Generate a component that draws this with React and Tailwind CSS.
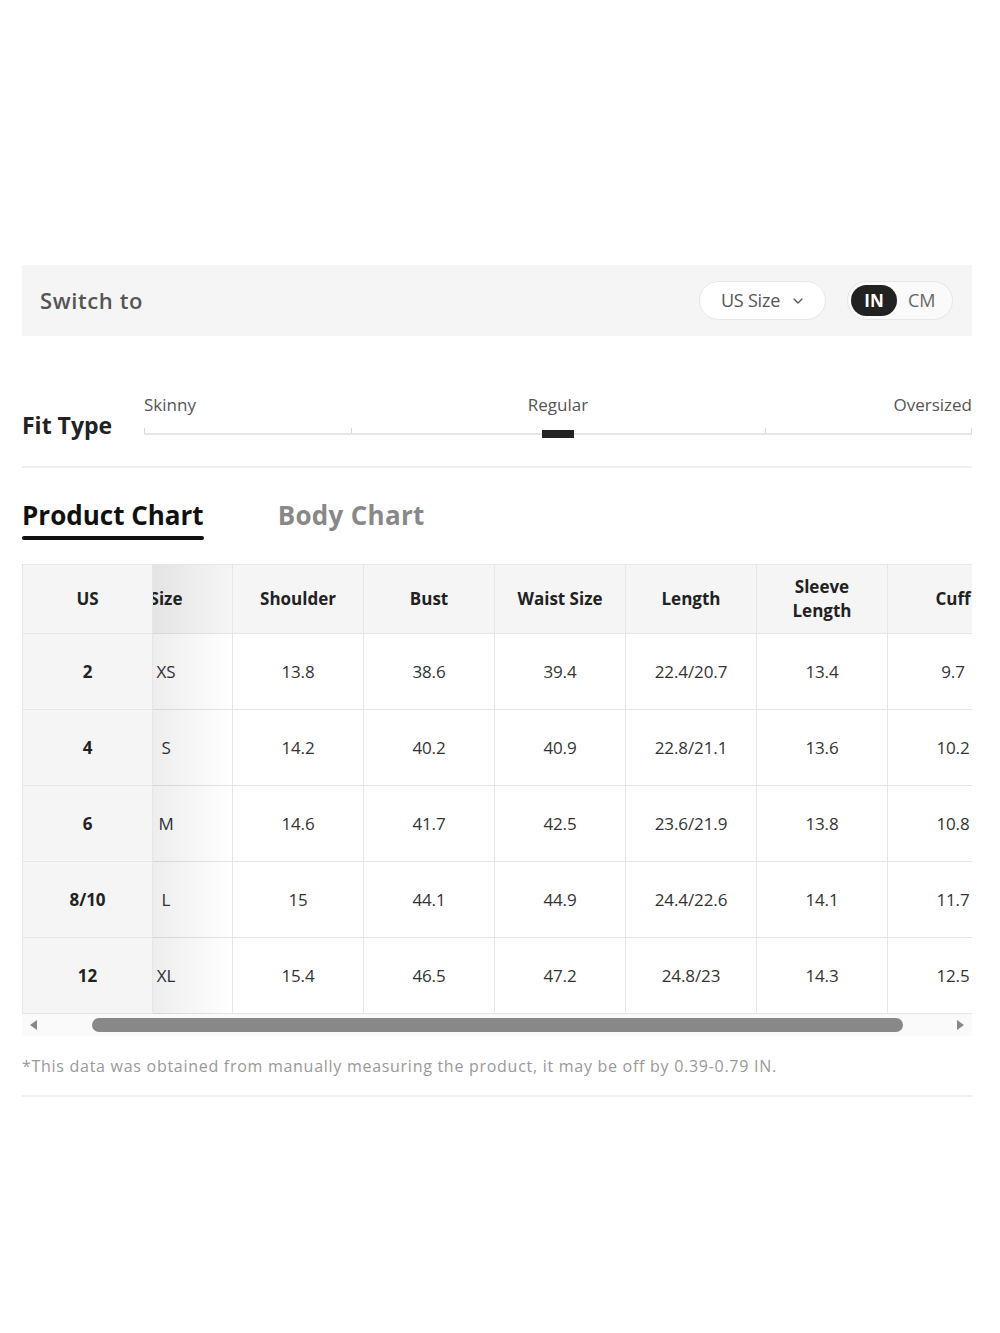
import React from 'react';

// Size guide panel — switch bar, fit slider, product chart with a scrolled table

const FONT = { fontFamily: '"Open Sans", "Noto Sans", sans-serif' };

const COLUMNS = [
  { key: 'size', label: 'Size' },
  { key: 'shoulder', label: 'Shoulder' },
  { key: 'bust', label: 'Bust' },
  { key: 'waist', label: 'Waist Size' },
  { key: 'length', label: 'Length' },
  { key: 'sleeve', label: ['Sleeve', 'Length'] },
  { key: 'cuff', label: 'Cuff' },
];

const ROWS = [
  { us: '2', size: 'XS', shoulder: '13.8', bust: '38.6', waist: '39.4', length: '22.4/20.7', sleeve: '13.4', cuff: '9.7' },
  { us: '4', size: 'S', shoulder: '14.2', bust: '40.2', waist: '40.9', length: '22.8/21.1', sleeve: '13.6', cuff: '10.2' },
  { us: '6', size: 'M', shoulder: '14.6', bust: '41.7', waist: '42.5', length: '23.6/21.9', sleeve: '13.8', cuff: '10.8' },
  { us: '8/10', size: 'L', shoulder: '15', bust: '44.1', waist: '44.9', length: '24.4/22.6', sleeve: '14.1', cuff: '11.7' },
  { us: '12', size: 'XL', shoulder: '15.4', bust: '46.5', waist: '47.2', length: '24.8/23', sleeve: '14.3', cuff: '12.5' },
];

function Chevron() {
  return (
    <svg width="12" height="12" viewBox="0 0 12 12" fill="none">
      <path d="M2 4l4 4 4-4" stroke="#555" strokeWidth="1.3" strokeLinecap="round" strokeLinejoin="round" />
    </svg>
  );
}

export default function App() {
  return (
    <div className="w-full h-[1333px] bg-white pt-[265px] px-[22px] text-[#333]" style={FONT}>
      <div className="w-[950px]">

        {/* ============ Switch bar ============ */}
        <div className="h-[71px] bg-[#f5f5f5] flex items-center justify-between pl-[18px] pr-[19px]">
          <span className="text-[22px] text-[#555] font-semibold tracking-[0.6px]">Switch to</span>
          <div className="flex items-center gap-[21px]">
            <div className="h-[39px] w-[127px] rounded-full bg-white border border-[#e6e6e6] flex items-center justify-center gap-[12px]">
              <span className="text-[18px] text-[#555] tracking-[-0.2px]">US Size</span>
              <Chevron />
            </div>
            <div className="h-[39px] w-[106px] rounded-full border border-[#e6e6e6] bg-[#fafafa] flex items-center pl-[3px] gap-[11px]">
              <span className="h-[31px] w-[46px] rounded-full bg-[#222] text-white text-[17px] font-bold flex items-center justify-center">IN</span>
              <span className="text-[18px] text-[#666]">CM</span>
            </div>
          </div>
        </div>

        {/* ============ Fit type ============ */}
        <div className="mt-[58px] pb-[31px] border-b-2 border-[#efefef] flex items-end">
          <div className="w-[122px] text-[23px] leading-[24px] font-bold text-[#222] translate-y-[2px]">Fit Type</div>
          <div className="flex-1">
            <div className="grid grid-cols-3 text-[17px] text-[#555] leading-[22px]">
              <span className="text-left">Skinny</span>
              <span className="text-center">Regular</span>
              <span className="text-right">Oversized</span>
            </div>
            <div className="relative mt-[12px] grid grid-cols-4 h-[7px] border-b-2 border-[#e6e6e6]">
              <div className="border-l border-[#d8d8d8]" />
              <div className="border-l border-[#d8d8d8]" />
              <div />
              <div className="border-l border-r border-[#d8d8d8]" />
              <div className="absolute left-1/2 -translate-x-1/2 top-[2px] w-[32px] h-[8px] bg-[#222]" />
            </div>
          </div>
        </div>

        {/* ============ Tabs ============ */}
        <div className="mt-[30px] flex gap-[74px] items-start">
          <div className="flex flex-col">
            <span className="text-[26px] font-bold text-[#111] leading-[34px]">Product Chart</span>
            <span className="mt-[4px] h-[4px] bg-[#111] rounded-sm" />
          </div>
          <span className="text-[26px] font-bold text-[#888] leading-[34px] tracking-[0.3px]">Body Chart</span>
        </div>

        {/* ============ Size table ============ */}
        <div className="mt-[24px] flex border-t border-l border-[#e6e6e6]">
          {/* sticky US column */}
          <div className="w-[130px] shrink-0 bg-[#f5f5f5]">
            <div className="h-[69px] flex items-center justify-center border-r border-b border-[#e6e6e6] text-[17px] font-bold text-[#222]">US</div>
            {ROWS.map((r) => (
              <div key={r.us} className="h-[76px] flex items-center justify-center border-r border-b border-[#e6e6e6] text-[17px] font-bold text-[#222]">
                {r.us}
              </div>
            ))}
          </div>

          {/* scrolled columns */}
          <div className="relative flex-1 overflow-hidden">
            <div className="ml-[-53px] w-max">
              <div className="flex h-[69px] bg-[#f5f5f5]">
                {COLUMNS.map((c, i) => (
                  <div key={c.key} className={`${i === 0 ? 'w-[133px]' : 'w-[131px]'} shrink-0 flex flex-col items-center justify-center border-r border-b border-[#e6e6e6] text-[17px] font-bold text-[#222] leading-[24px]`}>
                    {Array.isArray(c.label) ? c.label.map((l) => <span key={l}>{l}</span>) : c.label}
                  </div>
                ))}
              </div>
              {ROWS.map((r) => (
                <div key={r.us} className="flex h-[76px] bg-white">
                  {COLUMNS.map((c, i) => (
                    <div key={c.key} className={`${i === 0 ? 'w-[133px]' : 'w-[131px]'} shrink-0 flex items-center justify-center border-r border-b border-[#e6e6e6] text-[17px] text-[#333] tracking-[-0.1px]`}>
                      {r[c.key]}
                    </div>
                  ))}
                </div>
              ))}
            </div>
            {/* shadow under the sticky column */}
            <div className="absolute left-0 top-0 bottom-0 w-[80px] bg-gradient-to-r from-black/[0.07] to-transparent" />
          </div>
        </div>

        {/* ============ Scrollbar ============ */}
        <div className="h-[22px] bg-[#fafafa] flex items-center">
          <div className="w-[22px] flex justify-center pl-[2px]">
            <svg width="8" height="10" viewBox="0 0 8 10"><path d="M7 0v10L0 5z" fill="#888" /></svg>
          </div>
          <div className="ml-[48px] w-[811px] h-[14px] rounded-full bg-[#888]" />
          <div className="ml-[52px] w-[10px] flex justify-center">
            <svg width="8" height="10" viewBox="0 0 8 10"><path d="M1 0v10L8 5z" fill="#888" /></svg>
          </div>
        </div>

        {/* ============ Footnote ============ */}
        <div className="pt-[18px] pb-[17px] border-b-2 border-[#efefef] text-[16px] text-[#999] tracking-[0.72px]">
          *This data was obtained from manually measuring the product, it may be off by 0.39-0.79 IN.
        </div>
      </div>
    </div>
  );
}
